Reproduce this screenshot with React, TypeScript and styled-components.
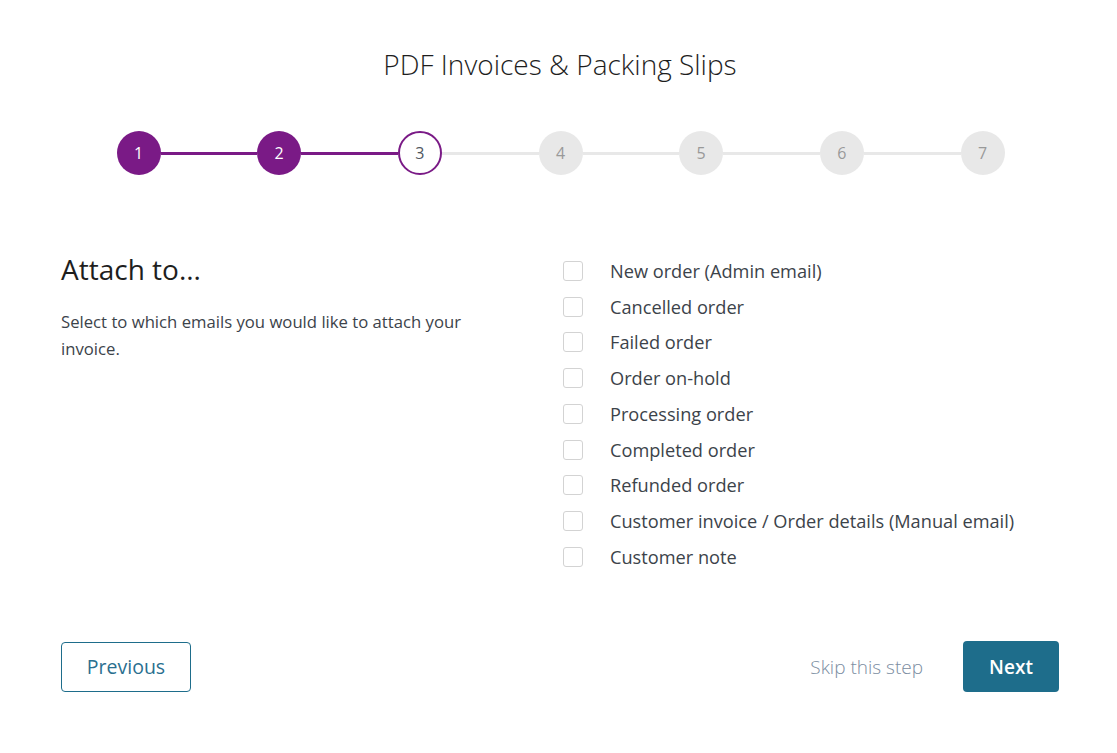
import styled, { createGlobalStyle } from 'styled-components';

const GlobalStyle = createGlobalStyle`
  html, body {
    margin: 0;
    padding: 0;
    background: #ffffff;
  }
  body {
    font-family: "Open Sans", "Noto Sans", sans-serif;
    color: #3c434a;
  }
`;

const STEPS = [1, 2, 3, 4, 5, 6, 7];
const CURRENT = 3;

const EMAILS = [
  'New order (Admin email)',
  'Cancelled order',
  'Failed order',
  'Order on-hold',
  'Processing order',
  'Completed order',
  'Refunded order',
  'Customer invoice / Order details (Manual email)',
  'Customer note'
];

/** ウィザード画面 */
export default function App() {
  return (
    <>
      <GlobalStyle />
      <Page>
        <Title>PDF Invoices &amp; Packing Slips</Title>

        <Stepper>
          {STEPS.map((n, idx) => (
            <StepItem key={n} $first={idx === 0}>
              {idx > 0 && <Connector $done={n <= CURRENT} />}
              <StepCircle $state={n < CURRENT ? 'done' : n === CURRENT ? 'current' : 'todo'}>
                {n}
              </StepCircle>
            </StepItem>
          ))}
        </Stepper>

        <Content>
          <Intro>
            <Heading>Attach to...</Heading>
            <Description>
              Select to which emails you would like to attach your invoice.
            </Description>
          </Intro>
          <CheckList>
            {EMAILS.map((label) => (
              <CheckRow key={label}>
                <CheckBox type="checkbox" />
                <CheckLabel>{label}</CheckLabel>
              </CheckRow>
            ))}
          </CheckList>
        </Content>

        <Footer>
          <PrevButton>Previous</PrevButton>
          <FooterRight>
            <SkipLink>Skip this step</SkipLink>
            <NextButton>Next</NextButton>
          </FooterRight>
        </Footer>
      </Page>
    </>
  );
}

const Page = styled.div`
  width: 998px;
  margin: 0 58px 0 61px;
  padding-top: 44px;
  box-sizing: border-box;
`;

const Title = styled.h1`
  margin: 0;
  text-align: center;
  font-size: 28px;
  font-weight: 300;
  color: #1e1e1e;
  line-height: 40px;
`;

const Stepper = styled.div`
  display: flex;
  width: 888px;
  margin: 47px auto 0;
  padding-left: 1px;
`;

const StepItem = styled.div<{ $first: boolean }>`
  display: flex;
  align-items: center;
  flex: ${(p) => (p.$first ? '0 0 auto' : '1 1 0')};
`;

const Connector = styled.div<{ $done: boolean }>`
  flex: 1;
  height: 3px;
  background: ${(p) => (p.$done ? '#7a1a86' : '#e8e8e8')};
`;

const StepCircle = styled.div<{ $state: 'done' | 'current' | 'todo' }>`
  width: 44px;
  height: 44px;
  border-radius: 50%;
  box-sizing: border-box;
  display: flex;
  align-items: center;
  justify-content: center;
  font-size: 16px;
  background: ${(p) => (p.$state === 'done' ? '#7a1a86' : p.$state === 'current' ? '#ffffff' : '#e8e8e8')};
  border: ${(p) => (p.$state === 'current' ? '2px solid #7a1a86' : 'none')};
  color: ${(p) => (p.$state === 'done' ? '#ffffff' : p.$state === 'current' ? '#50575e' : '#999999')};
`;

const Content = styled.div`
  display: grid;
  grid-template-columns: 1fr 1fr;
  margin-top: 78px;
  min-height: 388px;
`;

const Intro = styled.div`
  padding-right: 30px;
`;

const Heading = styled.h2`
  margin: 0;
  font-size: 28px;
  font-weight: 400;
  color: #1e1e1e;
  line-height: 32px;
`;

const Description = styled.p`
  margin: 23px 0 0;
  font-size: 16.7px;
  line-height: 27px;
  color: #3c434a;
  max-width: 420px;
`;

const CheckList = styled.div`
  display: flex;
  flex-direction: column;
  padding-left: 3px;
`;

const CheckRow = styled.label`
  display: flex;
  align-items: center;
  height: 35.75px;
`;

const CheckBox = styled.input`
  appearance: none;
  flex: none;
  width: 20px;
  height: 20px;
  margin: 0 27px 0 0;
  border: 1px solid #d3d3d3;
  border-radius: 3px;
  background: #ffffff;
  box-sizing: border-box;
`;

const CheckLabel = styled.span`
  font-size: 18.2px;
  color: #3c434a;
  white-space: nowrap;
`;

const Footer = styled.div`
  display: flex;
  justify-content: space-between;
  align-items: center;
`;

const FooterRight = styled.div`
  display: flex;
  align-items: center;
  gap: 40px;
`;

const PrevButton = styled.button`
  width: 130px;
  height: 50px;
  border: 1px solid #1e6d8b;
  border-radius: 4px;
  background: #ffffff;
  color: #2a6f8f;
  font-family: inherit;
  font-size: 19.5px;
`;

const SkipLink = styled.span`
  font-size: 19px;
  font-weight: 300;
  color: #7b8da1;
`;

const NextButton = styled.button`
  width: 96px;
  height: 51px;
  border: none;
  border-radius: 4px;
  background: #1e6d8b;
  color: #ffffff;
  font-family: inherit;
  font-size: 19px;
  font-weight: 600;
`;
